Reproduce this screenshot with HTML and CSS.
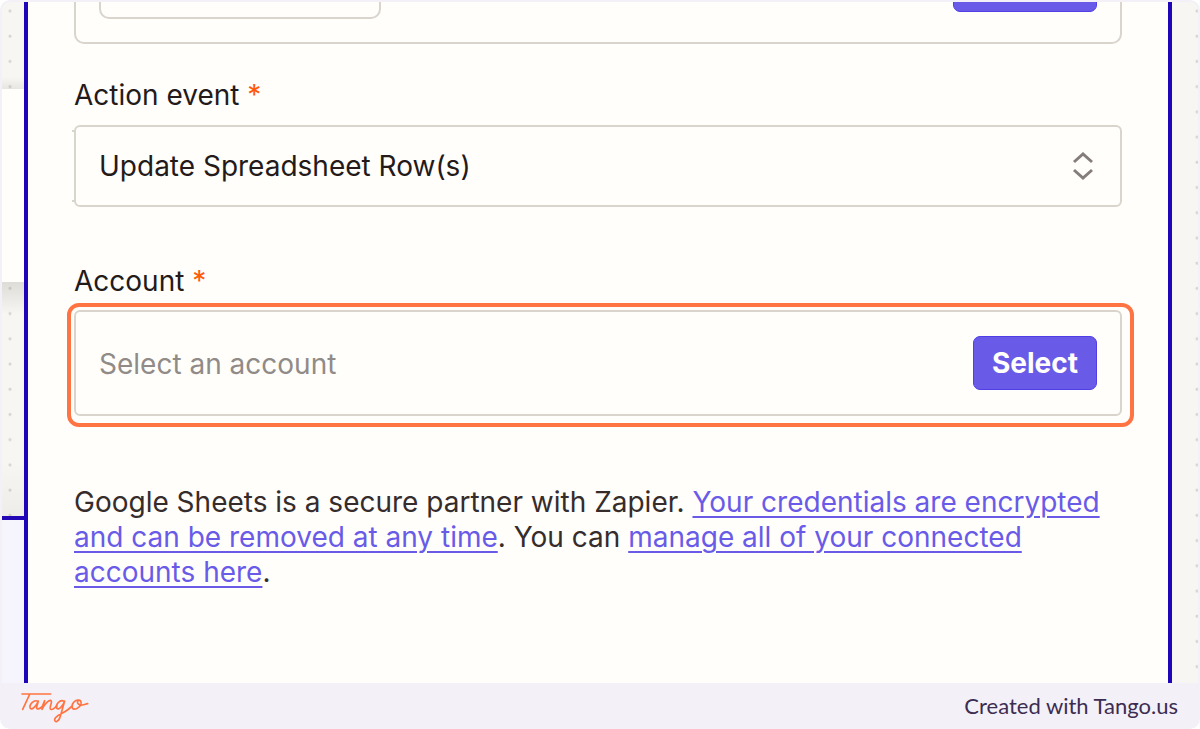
FILE: index.html
```html
<!DOCTYPE html>
<html lang="en">
<head>
    <meta charset="UTF-8">
    <meta name="viewport" content="width=device-width, initial-scale=1.0">
    <title>Action event</title>
    <link rel="stylesheet" href="styles.css">
</head>
<body>
    <div class="frame">
        <main class="canvas">
            <div class="side">
                <div class="side-top"></div>
                <div class="side-card"></div>
                <div class="side-shadow"></div>
                <div class="side-bottom"></div>
            </div>
            <form class="panel">
                <div class="app-card">
                    <div class="app-name"></div>
                    <button type="button" class="btn btn-wide" aria-label="Change"></button>
                </div>

                <label class="label" for="event">Action event <span class="required">*</span></label>
                <div class="select-box">
                    <select id="event" class="field">
                        <option>Update Spreadsheet Row(s)</option>
                    </select>
                    <svg class="arrows" viewBox="0 0 20 28" aria-hidden="true">
                        <path d="M1 10 L10 2 L19 10 M1 18 L10 26 L19 18"/>
                    </svg>
                </div>

                <label class="label" for="account">Account <span class="required">*</span></label>
                <div class="field account">
                    <input type="text" id="account" placeholder="Select an account" readonly>
                    <button type="button" class="btn">Select</button>
                </div>

                <p class="note">Google Sheets is a secure partner with Zapier. <a href="#">Your credentials are encrypted and can be removed at any time</a>. You can <a href="#">manage all of your connected accounts here</a>.</p>
            </form>
            <div class="side"></div>
        </main>
        <footer class="footer">
            <svg class="logo" viewBox="60 155 210 99" role="img" aria-label="Tango">
                <path d="M66 164 H152 M89 165 L68 210"/>
                <path d="M114 186 C102 179 86 197 91 207 C96 214 109 200 115 185 L110 203 C109 213 119 209 127 201 L134 184 L126 210 C133 195 149 178 154 185 C157 191 146 207 152 210 C158 212 166 204 170 199"/>
                <path d="M192 186 C180 179 166 196 170 206 C175 214 188 202 194 185 L181 231 C176 249 163 251 164 240 C166 226 196 222 214 202"/>
                <path d="M236 183 C224 180 213 196 217 206 C222 214 240 206 243 194 C245 184 237 179 233 185 C230 192 238 199 247 197 C254 196 257 194 263 193"/>
            </svg>
            <span>Created with Tango.us</span>
        </footer>
    </div>
</body>
</html>
```

FILE: styles.css
```css
* {
    box-sizing: border-box;
}
body {
    margin: 0;
    background-color: white;
    font-family: Inter, "Liberation Sans", sans-serif;
    font-size: 28px;
    font-optical-sizing: none;
    color: #241a1a;
}
.frame {
    display: flex;
    flex-direction: column;
    min-height: 100vh;
    padding: 2px 2px 0;
    background-color: #f3f1f7;
    border-radius: 10px;
    overflow: hidden;
}
.canvas {
    flex: 1;
    display: grid;
    grid-template-columns: 22px 1fr 26px;
    border-radius: 8px 8px 0 0;
    overflow: hidden;
}
.side {
    display: flex;
    flex-direction: column;
    background-color: #f7f6f3;
    background-image: radial-gradient(circle at 8px 9px, #d8d6d0 1px, transparent 2px);
    background-size: 26px 25px;
    background-repeat: no-repeat round;
}
.side:last-child {
    background-image: radial-gradient(circle at 25px 9px, #d8d6d0 1px, transparent 2px);
}
.side-top {
    height: 87px;
    background: linear-gradient(transparent 75px, rgba(90, 85, 70, 0.1));
}
.side-card {
    height: 193px;
    background-color: #fffefb;
}
.side-shadow {
    flex: 1;
    background: linear-gradient(rgba(90, 85, 70, 0.16), transparent 32px, transparent 180px, rgba(90, 85, 70, 0.06));
}
.side-bottom {
    height: 167px;
    background-color: #f6f5fd;
    border-top: 4px solid #2306b4;
}
.panel {
    padding: 0 46px;
    background-color: #fffefb;
    border: solid #1e06b8;
    border-width: 0 4px;
}
.app-card {
    display: flex;
    align-items: flex-end;
    justify-content: space-between;
    height: 42px;
    padding: 0 23px;
    border: 2px solid #d9d5cc;
    border-top: none;
    border-radius: 0 0 10px 10px;
    overflow: hidden;
}
.app-name {
    width: 282px;
    height: 54px;
    margin-bottom: 23px;
    border: 2px solid #d9d5cc;
    border-radius: 10px;
}
.label {
    display: block;
    padding-top: 34px;
    line-height: 34px;
}
.required {
    color: #ff5a0a;
}
.field {
    width: 100%;
    background-color: #fffefb;
    border: 2px solid #d9d5cc;
    border-radius: 6px;
}
.select-box {
    position: relative;
    margin-top: 13px;
    margin-bottom: 23px;
}
.select-box::before {
    content: "";
    position: absolute;
    left: -2px;
    top: 5px;
    bottom: 5px;
    width: 3px;
    border: solid #d9d5cc;
    border-width: 2px 0;
}
select.field {
    display: block;
    height: 82px;
    padding: 0 60px 0 23px;
    font: inherit;
    color: inherit;
    appearance: none;
}
.arrows {
    position: absolute;
    right: 29px;
    top: 27px;
    width: 20px;
    height: 28px;
    fill: none;
    stroke: #857d7b;
    stroke-width: 3;
    pointer-events: none;
}
.account {
    position: relative;
    display: flex;
    align-items: center;
    height: 106px;
    margin-top: 12px;
    padding: 0 23px;
}
.account::after {
    content: "";
    position: absolute;
    inset: -9px -14px -13px -9px;
    border: 4px solid #ff7442;
    border-radius: 12px;
    pointer-events: none;
}
.account input {
    flex: 1;
    min-width: 0;
    padding: 2px 0 0;
    border: none;
    background: none;
    font: inherit;
    outline: none;
}
.account input::placeholder {
    color: #918b88;
    opacity: 1;
}
.btn {
    height: 54px;
    padding: 0 18px;
    font: inherit;
    font-weight: 700;
    color: #fffefb;
    background-color: #695be8;
    border: 1px solid #503ee6;
    border-radius: 7px;
    cursor: pointer;
}
.btn-wide {
    width: 144px;
    margin-bottom: 30px;
}
.note {
    margin: 69px 0 0;
    line-height: 35px;
    color: #352c2b;
}
.note a {
    color: #695be8;
    text-decoration-thickness: 2px;
    text-underline-offset: 4px;
}
.footer {
    display: flex;
    align-items: center;
    justify-content: space-between;
    height: 46px;
    padding: 0 20px 2px 18px;
    font-family: Lato, sans-serif;
    font-size: 22px;
    color: #3d2c52;
}
.logo {
    width: 70px;
    height: 33px;
    margin-top: 4px;
    fill: none;
    stroke: #ff7442;
    stroke-width: 5;
    stroke-linecap: round;
    stroke-linejoin: round;
}
```
